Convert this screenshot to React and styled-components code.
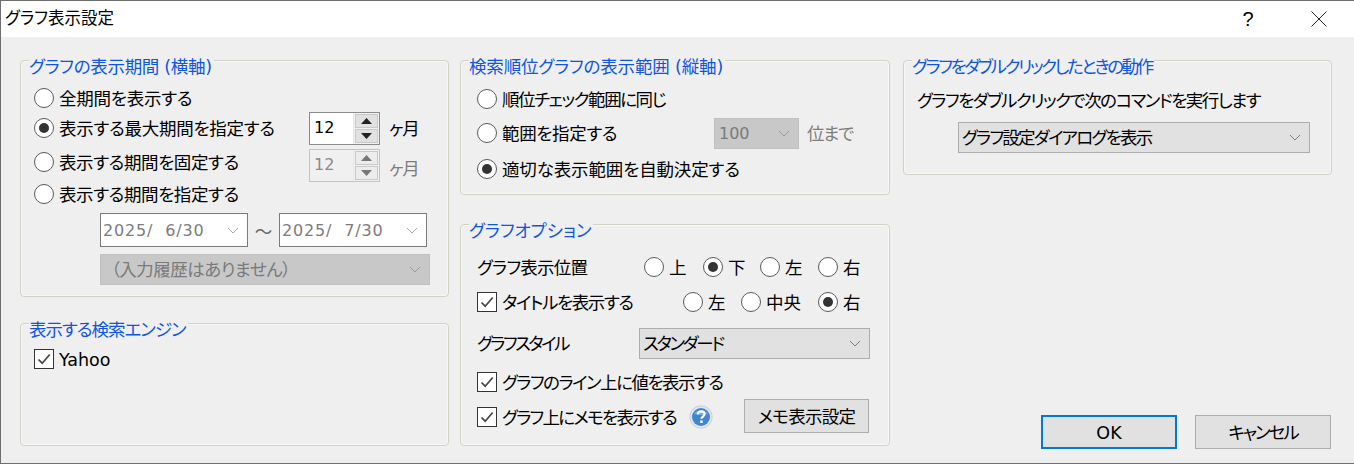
import React from "react";
import styled, { createGlobalStyle } from "styled-components";

const GlobalStyle = createGlobalStyle`
  html, body { margin: 0; padding: 0; background: #fff; }
  * { box-sizing: border-box; }
`;

function Chevron({ color = "#7c7c7c" }) {
  return (
    <svg width="12" height="7" viewBox="0 0 12 7">
      <path d="M1 1l5 5 5-5" fill="none" stroke={color} strokeWidth="1" />
    </svg>
  );
}

function Radio({ checked }) {
  return <RadioCircle>{checked && <RadioDot />}</RadioCircle>;
}

function Check() {
  return (
    <CheckBox>
      <svg width="14" height="12" viewBox="0 0 14 12">
        <path d="M1.5 6.5l3.7 3.7 7.5-8.7" fill="none" stroke="#444" strokeWidth="1.7" />
      </svg>
    </CheckBox>
  );
}

function Spinner({ value, disabled, $mt }) {
  const arrow = disabled ? "#777" : "#222";
  return (
    <SpinBox $disabled={disabled} $mt={$mt}>
      <SpinValue $disabled={disabled}>{value}</SpinValue>
      <SpinButtons>
        <SpinButton $disabled={disabled}>
          <svg width="11" height="6" viewBox="0 0 11 6"><path d="M5.5 0L11 6H0z" fill={arrow} /></svg>
        </SpinButton>
        <SpinButton $disabled={disabled}>
          <svg width="11" height="6" viewBox="0 0 11 6"><path d="M5.5 6L11 0H0z" fill={arrow} /></svg>
        </SpinButton>
      </SpinButtons>
    </SpinBox>
  );
}

function HelpIcon() {
  return (
    <svg width="24" height="24" viewBox="0 0 24 24">
      <circle cx="12" cy="12" r="11.2" fill="#dfe6ee" stroke="#c9ced4" />
      <circle cx="12" cy="12" r="9" fill="#3f86cf" />
      <path d="M5 9a7.5 6 0 0 1 14 0a12 5 0 0 1-14 0z" fill="#74a9e0" />
      <path
        d="M8.8 9.4c.2-1.9 1.5-3 3.4-3 2 0 3.3 1.1 3.3 2.7 0 2.4-3 2.5-3 4.6"
        fill="none"
        stroke="#fff"
        strokeWidth="2.2"
      />
      <rect x="11.2" y="15.4" width="2.5" height="2.6" fill="#fff" />
    </svg>
  );
}

export default function App() {
  return (
    <Dialog>
      <GlobalStyle />
      <TitleBar>
        <TitleText>グラフ表示設定</TitleText>
        <HelpMark>?</HelpMark>
        <CloseMark>
          <svg width="16" height="16" viewBox="0 0 16 16">
            <path d="M.5.5l15 15M15.5.5l-15 15" stroke="#222" strokeWidth="1" fill="none" />
          </svg>
        </CloseMark>
      </TitleBar>
      <Body>
        <Column $w={429} $gap={26}>
          <Group $h={237} $pad={13}>
            <Legend $ls={-0.3}>グラフの表示期間 (横軸)</Legend>
            <Row $mt={25}>
              <Option><Radio /><Label $ls={-0.25}>全期間を表示する</Label></Option>
            </Row>
            <Row $mt={6}>
              <Option $w={275}><Radio checked /><Label $ls={-0.26}>表示する最大期間を指定する</Label></Option>
              <Spinner value="12" />
              <Unit $ls={-1}>ヶ月</Unit>
            </Row>
            <Row $mt={10}>
              <Option $w={275}><Radio /><Label $ls={-0.4}>表示する期間を固定する</Label></Option>
              <Spinner value="12" disabled $mt={7} />
              <Unit $disabled $ls={-1} $mt={10}>ヶ月</Unit>
            </Row>
            <Row $mt={8}>
              <Option><Radio /><Label $ls={-0.4}>表示する期間を指定する</Label></Option>
            </Row>
            <DateRow>
              <DateBox>
                <DateText>2025/  6/30</DateText>
                <Chevron color="#aaa" />
              </DateBox>
              <Tilde>～</Tilde>
              <DateBox>
                <DateText>2025/  7/30</DateText>
                <Chevron color="#aaa" />
              </DateBox>
            </DateRow>
            <DisabledSelect $w={330} $h={31} $ml={66} $mt={7} $pl={10}>
              <Label $ls={-0.5}>（入力履歴はありません）</Label>
              <Chevron color="#9a9a9a" />
            </DisabledSelect>
          </Group>
          <Group $h={123} $pad={13}>
            <Legend $ls={-1}>表示する検索エンジン</Legend>
            <Row $mt={23}>
              <Option><Check /><LatinLabel>Yahoo</LatinLabel></Option>
            </Row>
          </Group>
        </Column>

        <Column $w={430} $gap={29}>
          <Group $h={135} $pad={16}>
            <Legend $left={8} $ls={-0.15}>検索順位グラフの表示範囲 (縦軸)</Legend>
            <Row $mt={26}>
              <Option><Radio /><Label $ls={-1.45}>順位チェック範囲に同じ</Label></Option>
            </Row>
            <Row $mt={10}>
              <Option $w={237}><Radio /><Label $ls={-0.35}>範囲を指定する</Label></Option>
              <DisabledSelect $w={85} $h={31} $pl={4}>
                <NumberText>100</NumberText>
                <Chevron color="#9a9a9a" />
              </DisabledSelect>
              <Unit $disabled $ml={8} $ls={-1.3}>位まで</Unit>
            </Row>
            <Row $mt={12}>
              <Option><Radio checked /><Label $ls={-0.15}>適切な表示範囲を自動決定する</Label></Option>
            </Row>
          </Group>
          <Group $h={222} $pad={16}>
            <Legend $left={8} $ls={-0.01}>グラフオプション</Legend>
            <Row $mt={30}>
              <Option $w={167}><Label $ls={-0.77}>グラフ表示位置</Label></Option>
              <Option $w={59}><Radio /><Label>上</Label></Option>
              <Option $w={57}><Radio checked /><Label>下</Label></Option>
              <Option $w={58}><Radio /><Label>左</Label></Option>
              <Option><Radio /><Label>右</Label></Option>
            </Row>
            <Row $mt={11}>
              <Option $w={206}><Check /><Label $ls={-1.4}>タイトルを表示する</Label></Option>
              <Option $w={58}><Radio /><Label>左</Label></Option>
              <Option $w={77}><Radio /><Label>中央</Label></Option>
              <Option><Radio checked /><Label>右</Label></Option>
            </Row>
            <Row $mt={17}>
              <Option $w={162}><Label $ls={-2.5}>グラフスタイル</Label></Option>
              <SelectBox $w={231}>
                <Label $ls={-2.3}>スタンダード</Label>
                <Chevron />
              </SelectBox>
            </Row>
            <Row $mt={15}>
              <Option><Check /><Label $ls={-1.5}>グラフのライン上に値を表示する</Label></Option>
            </Row>
            <Row $mt={11}>
              <Option $w={212}><Check /><Label $ls={-1.7}>グラフ上にメモを表示する</Label></Option>
              <HelpIcon />
              <MemoButton><Label $ls={-0.7}>メモ表示設定</Label></MemoButton>
            </Row>
          </Group>
        </Column>

        <Column $w={429} $h={389}>
          <Group $h={115} $pad={13}>
            <Legend $left={8} $ls={-2.4}>グラフをダブルクリックしたときの動作</Legend>
            <Row $mt={27}>
              <Option><Label $ls={-1.5}>グラフをダブルクリックで次のコマンドを実行します</Label></Option>
            </Row>
            <SelectBox $w={352} $ml={41} $mt={10}>
              <Label $ls={-1.75}>グラフ設定ダイアログを表示</Label>
              <Chevron />
            </SelectBox>
          </Group>
          <Buttons>
            <PushButton $primary><LatinLabel>OK</LatinLabel></PushButton>
            <PushButton><Label $ls={-2}>キャンセル</Label></PushButton>
          </Buttons>
        </Column>
      </Body>
    </Dialog>
  );
}

const font = `"DejaVu Sans", "Noto Sans CJK JP", sans-serif`;

const Dialog = styled.div`
  width: 1354px;
  height: 464px;
  background: #efefef;
  border: 1px solid #6e6e6e;
  border-right: none;
  font-family: ${font};
  font-size: 17.5px;
  font-feature-settings: "palt";
  color: #000;
  overflow: hidden;
`;

const TitleBar = styled.div`
  height: 36px;
  background: #fff;
  display: flex;
  align-items: center;
  padding-left: 4px;
`;

const TitleText = styled.div`
  font-size: 16.5px;
  flex: 1;
  line-height: 36px;
`;

const HelpMark = styled.div`
  width: 20px;
  text-align: center;
  font-family: "Liberation Sans", sans-serif;
  font-size: 20px;
  margin-right: 53px;
  margin-left: -1px;
`;

const CloseMark = styled.div`
  width: 16px;
  height: 16px;
  margin-right: 27px;
  line-height: 0;
`;

const Body = styled.div`
  display: flex;
  align-items: flex-start;
  padding: 23px 0 0 19px;
  & > * + * { margin-left: 11px; }
  & > * + * + * { margin-left: 13px; }
`;

const Column = styled.div`
  width: ${(p) => p.$w}px;
  ${(p) => p.$h && `height: ${p.$h}px;`}
  display: flex;
  flex-direction: column;
  gap: ${(p) => p.$gap || 0}px;
`;

const Group = styled.section`
  position: relative;
  height: ${(p) => p.$h}px;
  padding: 0 0 0 ${(p) => p.$pad}px;
  border: 1px solid #d2d2c4;
  border-radius: 4px;
  box-shadow: inset 0 0 0 1px #f7f7f4;
`;

const Legend = styled.div`
  position: absolute;
  top: -1px;
  left: ${(p) => p.$left ?? 8}px;
  padding-right: 2px;
  background: #efefef;
  color: #0f55e0;
  font-size: 17.5px;
  letter-spacing: ${(p) => p.$ls || 0}px;
  line-height: 14px;
  white-space: nowrap;
`;

const Row = styled.div`
  display: flex;
  align-items: center;
  height: 24px;
  margin-top: ${(p) => p.$mt || 0}px;
  white-space: nowrap;
`;

const Option = styled.div`
  display: flex;
  align-items: center;
  gap: 5px;
  ${(p) => p.$w && `width: ${p.$w}px; flex: none;`}
`;

const Label = styled.span`
  letter-spacing: ${(p) => p.$ls || 0}px;
  margin-top: -2px;
`;

const LatinLabel = styled.span`
  font-size: 17.5px;
  margin-top: 2px;
`;

const NumberText = styled.span`
  font-size: 16px;
`;

const RadioCircle = styled.span`
  width: 20px;
  height: 20px;
  flex: none;
  border-radius: 50%;
  border: 1.5px solid #5a5a5a;
  background: #fff;
  display: flex;
  align-items: center;
  justify-content: center;
`;

const RadioDot = styled.span`
  width: 10px;
  height: 10px;
  border-radius: 50%;
  background: #333;
`;

const CheckBox = styled.span`
  width: 20px;
  height: 20px;
  flex: none;
  border: 1.5px solid #333;
  background: #fff;
  display: flex;
  align-items: center;
  justify-content: center;
`;

const SpinBox = styled.div`
  width: 71px;
  height: 33px;
  flex: none;
  display: flex;
  border: 1px solid ${(p) => (p.$disabled ? "#c4c4c4" : "#8c8c8c")};
  margin-top: ${(p) => p.$mt || 0}px;
  background: #fff;
`;

const SpinValue = styled.div`
  flex: 1;
  padding-left: 4px;
  line-height: 29px;
  font-size: 16px;
  color: ${(p) => (p.$disabled ? "#8a8a8a" : "#000")};
  background: ${(p) => (p.$disabled ? "#f0f0f0" : "#fff")};
`;

const SpinButtons = styled.div`
  width: 26px;
  display: flex;
  flex-direction: column;
  gap: 1px;
  padding: 1px;
  background: #f1f1f1;
  border-left: 1px solid #e8e8e8;
`;

const SpinButton = styled.div`
  flex: 1;
  display: flex;
  align-items: center;
  justify-content: center;
  background: ${(p) => (p.$disabled ? "#ececec" : "#e1e1e1")};
  border: 1px solid #c9c9c9;
`;

const Unit = styled.span`
  margin-left: ${(p) => p.$ml ?? 9}px;
  margin-top: ${(p) => p.$mt ?? -2}px;
  letter-spacing: ${(p) => p.$ls || 0}px;
  color: ${(p) => (p.$disabled ? "#7d7d7d" : "#000")};
`;

const DateRow = styled.div`
  display: flex;
  align-items: center;
  margin: 7px 0 0 66px;
`;

const DateBox = styled.div`
  width: 148px;
  height: 34px;
  display: flex;
  align-items: center;
  justify-content: space-between;
  padding: 0 8px 0 2px;
  background: #fff;
  border: 1px solid #7a7a7a;
`;

const DateText = styled.span`
  color: #7c7c7c;
  font-size: 16px;
  letter-spacing: 0.85px;
  white-space: pre;
`;

const Tilde = styled.span`
  width: 31px;
  text-align: center;
  color: #666;
`;

const DisabledSelect = styled.div`
  width: ${(p) => p.$w}px;
  height: ${(p) => p.$h}px;
  flex: none;
  display: flex;
  align-items: center;
  justify-content: space-between;
  margin: ${(p) => p.$mt || 0}px 0 0 ${(p) => p.$ml || 0}px;
  padding: 0 8px 0 ${(p) => p.$pl}px;
  background: #c8c8c8;
  border: 1px solid #c0c0c0;
  color: #7a7a7a;
`;

const SelectBox = styled.div`
  width: ${(p) => p.$w}px;
  height: 31px;
  flex: none;
  display: flex;
  align-items: center;
  justify-content: space-between;
  margin: ${(p) => p.$mt || 0}px 0 0 ${(p) => p.$ml || 0}px;
  padding: 0 8px 0 3px;
  background: #e1e1e1;
  border: 1px solid #adadad;
`;

const MemoButton = styled.div`
  width: 125px;
  height: 34px;
  flex: none;
  margin: -2px 0 0 31px;
  display: flex;
  align-items: center;
  justify-content: center;
  background: #e1e1e1;
  border: 1px solid #adadad;
`;

const Buttons = styled.div`
  margin-top: auto;
  display: flex;
  justify-content: flex-end;
  gap: 18px;
  padding-right: 1px;
`;

const PushButton = styled.div`
  width: 136px;
  height: 34px;
  display: flex;
  align-items: center;
  justify-content: center;
  background: #e1e1e1;
  border: ${(p) => (p.$primary ? "2px solid #0078d7" : "1px solid #adadad")};
`;
